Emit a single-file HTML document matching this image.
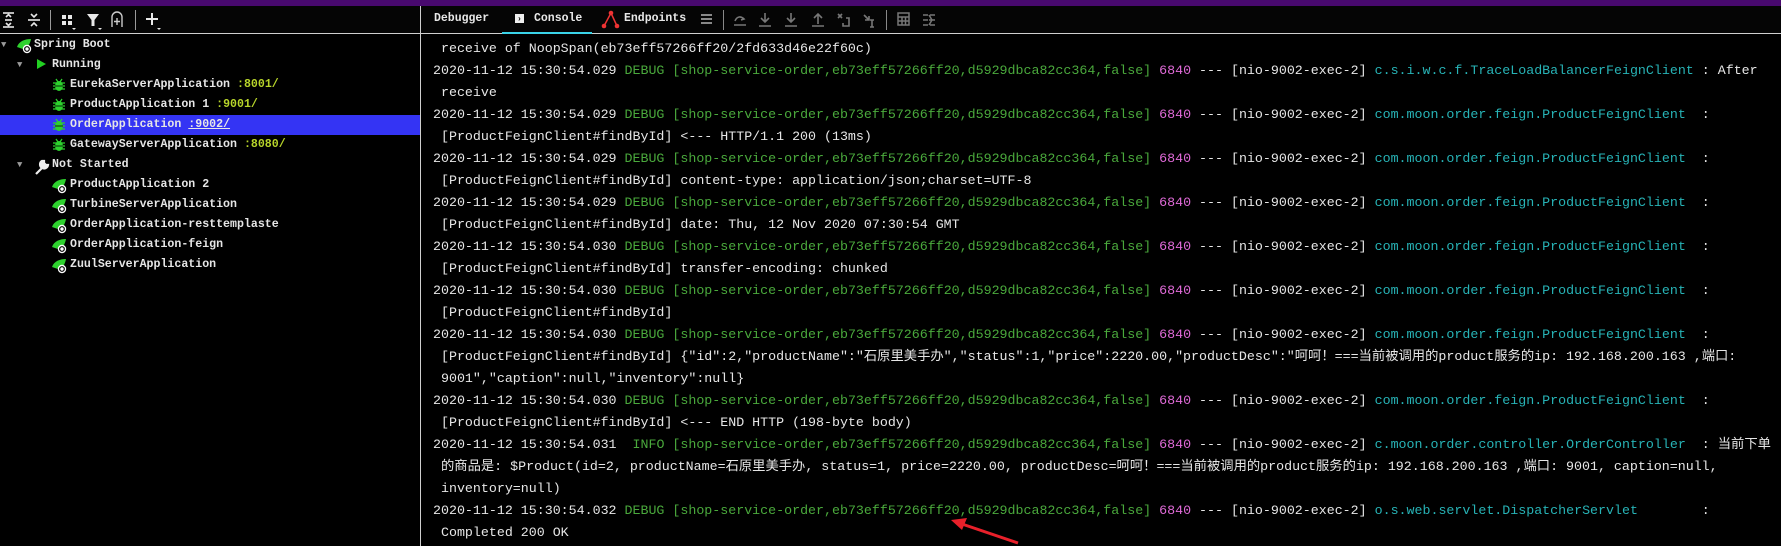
<!DOCTYPE html>
<html><head><meta charset="utf-8"><style>
*{margin:0;padding:0;box-sizing:border-box}
body{width:1781px;height:546px;background:#000;overflow:hidden;position:relative;font-family:"Liberation Mono","Noto Sans CJK SC",monospace;color:#e6e6e6}
.top{position:absolute;left:0;top:0;width:1781px;height:6px;background:#48096e}
.tb{position:absolute;left:0;top:6px;width:1781px;height:28px;background:#050505;border-bottom:1px solid #cfcfcf}
.psep{position:absolute;left:420px;top:6px;width:1px;height:540px;background:#cfcfcf}
.ico{position:absolute}
.tree{position:absolute;left:0;top:35px;width:420px;font-size:11.6px;font-weight:bold}
.row{position:absolute;left:0;width:420px;height:20px;line-height:20px;white-space:pre}
.sel{background:#3434f4}
.port{color:#b7d42a}
.tab{position:absolute;top:6px;height:28px;line-height:25px;font-size:11.5px;font-weight:bold;color:#e8e8e8}
.con{position:absolute;left:433px;top:38px;font-size:13.3px;white-space:pre;line-height:22px}
.g{color:#4aa93c}.p{color:#e06ad8}.c{color:#27b3b6}
.tri{color:#9a9a9a;font-size:9px}
</style></head><body>
<div class="top"></div>
<div class="tb"></div>
<svg class="ico" style="left:0;top:6px" width="420" height="28">
<g stroke="#e8e8e8" stroke-width="1.6" fill="#e8e8e8">
<line x1="3" y1="7" x2="14" y2="7"/><line x1="3" y1="21" x2="14" y2="21"/><line x1="5" y1="14" x2="12" y2="14"/>
<path d="M6 11l2.5-2.5 2.5 2.5M6 17l2.5 2.5 2.5-2.5" fill="none"/>
<line x1="28" y1="14" x2="40" y2="14"/><path d="M31 8l3 3 3-3M31 20l3-3 3 3" fill="none"/>
</g>
<rect x="50" y="4" width="1" height="20" fill="#9a9a9a"/>
<g fill="#e8e8e8"><rect x="62" y="9" width="4" height="4"/><rect x="68" y="9" width="4" height="4"/><rect x="62" y="15" width="4" height="4"/><rect x="68" y="15" width="4" height="4"/>
<path d="M87 8h12l-4.5 6v6h-3v-6z"/><path d="M72 22h4l-2 2zM98 22h4l-2 2zM157 22h4l-2 2z"/></g>
<path d="M112 21v-10a5 5 0 0 1 10 0v10M117 12v7M114 15.5h6" stroke="#ccc" stroke-width="1.4" fill="none"/>
<rect x="135" y="4" width="1" height="20" fill="#9a9a9a"/>
<path d="M152 7v12M146 13h12" stroke="#e8e8e8" stroke-width="2"/>
</svg>
<div class="tree">
<div class="row sel" style="top:80px"></div>
<div class="row" style="top:0;left:1px"><span class="tri">▼</span></div>
<div class="row" style="top:0;left:34px">Spring Boot</div>
<div class="row" style="top:20px;left:17px"><span class="tri">▼</span></div>
<div class="row" style="top:20px;left:52px">Running</div>
<div class="row" style="top:40px;left:70px">EurekaServerApplication <span class="port">:8001/</span></div>
<div class="row" style="top:60px;left:70px">ProductApplication 1 <span class="port">:9001/</span></div>
<div class="row" style="top:80px;left:70px">OrderApplication <span style="text-decoration:underline">:9002/</span></div>
<div class="row" style="top:100px;left:70px">GatewayServerApplication <span class="port">:8080/</span></div>
<div class="row" style="top:120px;left:17px"><span class="tri">▼</span></div>
<div class="row" style="top:120px;left:52px">Not Started</div>
<div class="row" style="top:140px;left:70px">ProductApplication 2</div>
<div class="row" style="top:160px;left:70px">TurbineServerApplication</div>
<div class="row" style="top:180px;left:70px">OrderApplication-resttemplaste</div>
<div class="row" style="top:200px;left:70px">OrderApplication-feign</div>
<div class="row" style="top:220px;left:70px">ZuulServerApplication</div>
</div>
<svg class="ico" style="left:0;top:35px" width="80" height="240">
<defs>
<g id="spr"><path d="M0 8c2-6 8-8 14-8-1 5-3 9-8 10z" fill="#2ed12e"/><circle cx="10" cy="10" r="4.2" fill="#fff"/><circle cx="10" cy="10" r="2.3" fill="none" stroke="#000" stroke-width="1.2"/></g>
<g id="bug"><ellipse cx="6" cy="7" rx="4" ry="5" fill="#2ed12e"/><path d="M0 4h12M0 7h12M0 10h12M3 0l2 3M9 0l-2 3" stroke="#2ed12e" stroke-width="1.3"/><path d="M2 7h8" stroke="#000" stroke-width=".8"/></g>
</defs>
<use href="#spr" x="17" y="4"/>
<path d="M37 24v10l9-5z" fill="#22d022"/>
<use href="#bug" x="53" y="44"/><use href="#bug" x="53" y="64"/><use href="#bug" x="53" y="84"/><use href="#bug" x="53" y="104"/>
<path d="M36 139l8-8M42 126a4 4 0 1 0 6 4l-2 0-2-2 0-2z" stroke="#eee" stroke-width="2.2" fill="#eee"/>
<use href="#spr" x="52" y="144"/><use href="#spr" x="52" y="164"/><use href="#spr" x="52" y="184"/><use href="#spr" x="52" y="204"/><use href="#spr" x="52" y="224"/>
</svg>
<div class="psep"></div>
<div class="tab" style="left:434px">Debugger</div>
<div class="tab" style="left:534px">Console</div>
<div style="position:absolute;left:515px;top:14px;width:9px;height:9px;background:#eee"></div>
<div style="position:absolute;left:517px;top:15px;color:#000;font-size:8px;font-weight:bold">›</div>
<div style="position:absolute;left:502px;top:32px;width:90px;height:2px;background:#3ad3e8"></div>
<div class="tab" style="left:624px">Endpoints</div>
<svg class="ico" style="left:600px;top:6px" width="300" height="28">
<path d="M4 20l7-13 6 13" stroke="#e33" stroke-width="1.5" fill="none"/><circle cx="4" cy="20" r="2.3" fill="#e33"/><circle cx="11" cy="7" r="2.3" fill="#e33"/><circle cx="17" cy="20" r="2.3" fill="#e33"/>
<path d="M101 9h11M101 13h11M101 17h11" stroke="#888" stroke-width="2"/>
<rect x="123" y="4" width="1" height="20" fill="#888"/>
<g stroke="#777" stroke-width="1.6" fill="none">
<path d="M134 19h12M135 15c2-5 6-5 9-2l-3 1"/>
<path d="M165 7v9M161 12l4 4 4-4M159 20h12"/>
<path d="M191 7v9M187 12l4 4 4-4M185 20h12"/>
<path d="M218 18v-9M214 12l4-4 4 4M212 20h12"/>
<path d="M238 8l4 4M242 8l-4 4M246 12h3v8h-6v-3"/>
<path d="M264 9l5 5M269 10v4h-4M272 14v7M270 14h4M270 21h4"/>
</g>
<rect x="286" y="4" width="1" height="20" fill="#888"/>
</svg>
<svg class="ico" style="left:896px;top:6px" width="60" height="28">
<g stroke="#777" stroke-width="1.5" fill="none"><rect x="2" y="7" width="11" height="12"/><path d="M2 11h11M2 15h11M6 11v8M9.5 11v8"/>
<path d="M27 9h5M27 14h5M27 19h5M34 9h5M34 19h5M33 14h6M33 9l3 5-3 5"/></g>
</svg>
<div class="con"> receive of NoopSpan(eb73eff57266ff20/2fd633d46e22f60c)
2020-11-12 15:30:54.029 <span class="g">DEBUG [shop-service-order,eb73eff57266ff20,d5929dbca82cc364,false]</span> <span class="p">6840</span> --- [nio-9002-exec-2] <span class="c">c.s.i.w.c.f.TraceLoadBalancerFeignClient</span> : After
 receive
2020-11-12 15:30:54.029 <span class="g">DEBUG [shop-service-order,eb73eff57266ff20,d5929dbca82cc364,false]</span> <span class="p">6840</span> --- [nio-9002-exec-2] <span class="c">com.moon.order.feign.ProductFeignClient </span> :
 [ProductFeignClient#findById] &lt;--- HTTP/1.1 200 (13ms)
2020-11-12 15:30:54.029 <span class="g">DEBUG [shop-service-order,eb73eff57266ff20,d5929dbca82cc364,false]</span> <span class="p">6840</span> --- [nio-9002-exec-2] <span class="c">com.moon.order.feign.ProductFeignClient </span> :
 [ProductFeignClient#findById] content-type: application/json;charset=UTF-8
2020-11-12 15:30:54.029 <span class="g">DEBUG [shop-service-order,eb73eff57266ff20,d5929dbca82cc364,false]</span> <span class="p">6840</span> --- [nio-9002-exec-2] <span class="c">com.moon.order.feign.ProductFeignClient </span> :
 [ProductFeignClient#findById] date: Thu, 12 Nov 2020 07:30:54 GMT
2020-11-12 15:30:54.030 <span class="g">DEBUG [shop-service-order,eb73eff57266ff20,d5929dbca82cc364,false]</span> <span class="p">6840</span> --- [nio-9002-exec-2] <span class="c">com.moon.order.feign.ProductFeignClient </span> :
 [ProductFeignClient#findById] transfer-encoding: chunked
2020-11-12 15:30:54.030 <span class="g">DEBUG [shop-service-order,eb73eff57266ff20,d5929dbca82cc364,false]</span> <span class="p">6840</span> --- [nio-9002-exec-2] <span class="c">com.moon.order.feign.ProductFeignClient </span> :
 [ProductFeignClient#findById]
2020-11-12 15:30:54.030 <span class="g">DEBUG [shop-service-order,eb73eff57266ff20,d5929dbca82cc364,false]</span> <span class="p">6840</span> --- [nio-9002-exec-2] <span class="c">com.moon.order.feign.ProductFeignClient </span> :
 [ProductFeignClient#findById] {"id":2,"productName":"石原里美手办","status":1,"price":2220.00,"productDesc":"呵呵！===当前被调用的product服务的ip: 192.168.200.163 ,端口:
 9001","caption":null,"inventory":null}
2020-11-12 15:30:54.030 <span class="g">DEBUG [shop-service-order,eb73eff57266ff20,d5929dbca82cc364,false]</span> <span class="p">6840</span> --- [nio-9002-exec-2] <span class="c">com.moon.order.feign.ProductFeignClient </span> :
 [ProductFeignClient#findById] &lt;--- END HTTP (198-byte body)
2020-11-12 15:30:54.031  <span class="g">INFO [shop-service-order,eb73eff57266ff20,d5929dbca82cc364,false]</span> <span class="p">6840</span> --- [nio-9002-exec-2] <span class="c">c.moon.order.controller.OrderController </span> : 当前下单
 的商品是: $Product(id=2, productName=石原里美手办, status=1, price=2220.00, productDesc=呵呵！===当前被调用的product服务的ip: 192.168.200.163 ,端口: 9001, caption=null,
 inventory=null)
2020-11-12 15:30:54.032 <span class="g">DEBUG [shop-service-order,eb73eff57266ff20,d5929dbca82cc364,false]</span> <span class="p">6840</span> --- [nio-9002-exec-2] <span class="c">o.s.web.servlet.DispatcherServlet       </span> :
 Completed 200 OK</div>
<svg class="ico" style="left:0;top:0" width="1781" height="546">
<path d="M1018 543L962 524" stroke="#e8202a" stroke-width="3"/>
<path d="M951 520l16-2-5 12z" fill="#e8202a"/>
</svg>
</body></html>
